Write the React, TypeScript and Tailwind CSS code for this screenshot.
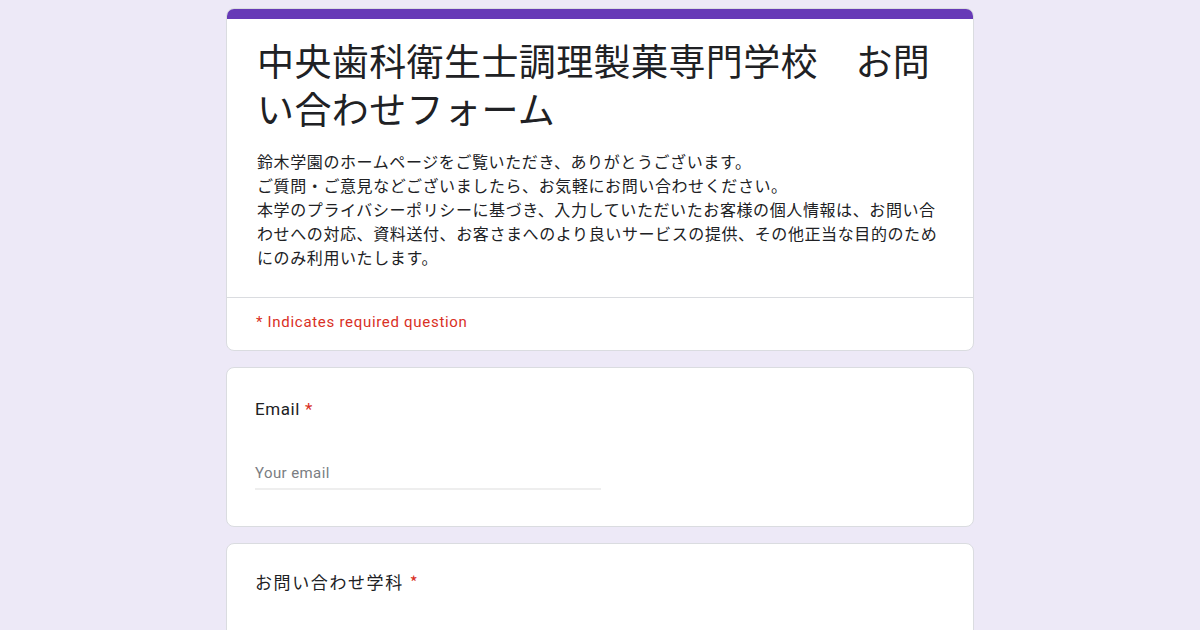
export default function App() {
  const cjk = { fontFamily: '"Noto Sans CJK JP", "Noto Sans", sans-serif' };
  const latin = { fontFamily: 'Roboto, "Noto Sans CJK JP", sans-serif' };

  return (
    <div className="min-h-screen w-full bg-[#ede9f7] flex flex-col items-center pt-[8px] gap-[16px]">
      {/* header card */}
      <div className="w-[748px] bg-white rounded-lg border border-[#dadce0] overflow-hidden">
        <div className="h-[10px] bg-[#673ab7]" />
        <div className="px-[30px] pt-[17px] pb-[28px] text-[#202124]" style={cjk}>
          <h1 className="text-[37px] leading-[48px] font-normal tracking-[0.4px]">
            中央歯科衛生士調理製菓専門学校　お問い合わせフォーム
          </h1>
          <p className="mt-[17px] text-[16px] leading-[24px] tracking-[0.6px]">
            鈴木学園のホームページをご覧いただき、ありがとうございます。
            <br />
            ご質問・ご意見などございましたら、お気軽にお問い合わせください。
            <br />
            本学のプライバシーポリシーに基づき、入力していただいたお客様の個人情報は、お問い合わせへの対応、資料送付、お客さまへのより良いサービスの提供、その他正当な目的のためにのみ利用いたします。
          </p>
        </div>
        <div className="border-t border-[#dadce0] px-[29px] pt-[14px] pb-[18px]">
          <p className="text-[15px] leading-[20px] tracking-[0.7px] text-[#d93025]" style={latin}>
            * Indicates required question
          </p>
        </div>
      </div>

      {/* email card */}
      <div className="w-[748px] bg-white rounded-lg border border-[#dadce0] px-[28px] pt-[29px] pb-[36px]">
        <div className="text-[17px] leading-[24px] tracking-[0.6px] text-[#202124]" style={latin}>
          Email <span className="text-[#d93025]">*</span>
        </div>
        <div className="mt-[39px] w-[346px] border-b-2 border-[#eeeeee] pb-[4px]">
          <span className="text-[15px] leading-[20px] tracking-[0.4px] text-[#7a7d82]" style={latin}>
            Your email
          </span>
        </div>
      </div>

      {/* department card */}
      <div className="w-[748px] bg-white rounded-lg border border-[#dadce0] px-[28px] pt-[26px] pb-[60px]">
        <div className="text-[17px] leading-[24px] tracking-[1.6px] text-[#202124]" style={cjk}>
          お問い合わせ学科<span className="ml-[6px] text-[#d93025]">*</span>
        </div>
      </div>
    </div>
  );
}
